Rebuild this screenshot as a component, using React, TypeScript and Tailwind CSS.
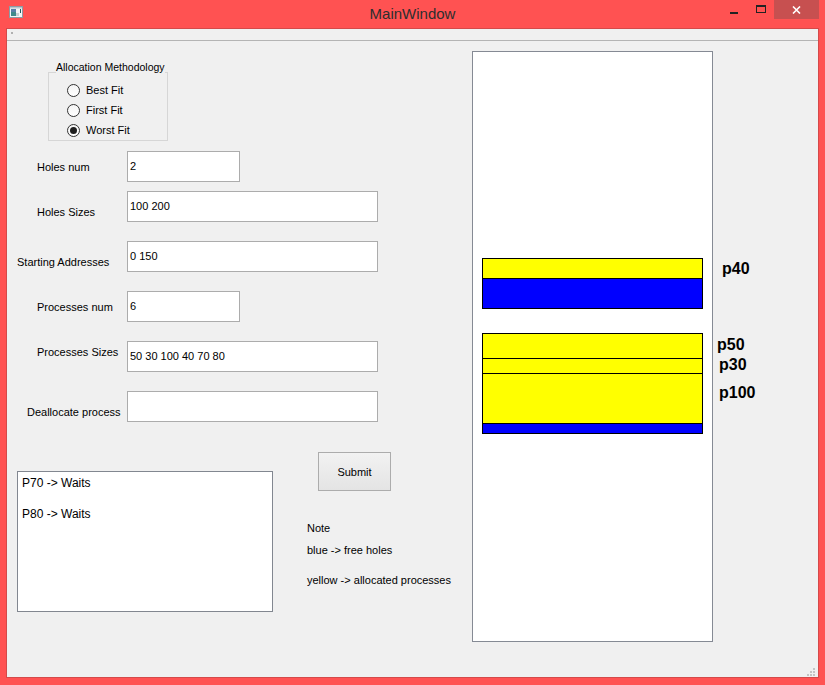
import { useState } from 'react'

type Segment = { name: string; size: number; free?: boolean }
type Hole = { start: number; segments: Segment[] }

// memory map: 1 unit of address = 0.5px on the canvas
const SCALE = 0.5
const BASE_Y = 206

const holes: Hole[] = [
  { start: 0, segments: [{ name: 'p40', size: 40 }, { name: 'free', size: 60, free: true }] },
  {
    start: 150,
    segments: [
      { name: 'p50', size: 50 },
      { name: 'p30', size: 30 },
      { name: 'p100', size: 100 },
      { name: 'free', size: 20, free: true },
    ],
  },
]

// the QLabels beside the view were placed by hand
const tags = [
  { text: 'p40', left: 250, top: 209 },
  { text: 'p50', left: 245, top: 285 },
  { text: 'p30', left: 247, top: 305 },
  { text: 'p100', left: 247, top: 333 },
]

const fields = [
  { label: 'Holes num', value: '2', wide: false, pl: 'pl-[30px]', pt: 'pt-[10px]', mt: 'mt-[10px]' },
  { label: 'Holes Sizes', value: '100 200', wide: true, pl: 'pl-[30px]', pt: 'pt-[15px]', mt: 'mt-[9px]' },
  { label: 'Starting Addresses', value: '0 150', wide: true, pl: 'pl-[10px]', pt: 'pt-[15px]', mt: 'mt-[19px]' },
  { label: 'Processes num', value: '6', wide: false, pl: 'pl-[30px]', pt: 'pt-[10px]', mt: 'mt-[19px]' },
  { label: 'Processes Sizes', value: '50 30 100 40 70 80', wide: true, pl: 'pl-[30px]', pt: 'pt-[5px]', mt: 'mt-[19px]' },
  { label: 'Deallocate process', value: '', wide: true, pl: 'pl-[20px]', pt: 'pt-[15px]', mt: 'mt-[19px]' },
]

function AppIcon() {
  return (
    <svg width="14" height="12" viewBox="0 0 14 12">
      <rect x="0.5" y="0.5" width="13" height="11" fill="#f4f6f7" stroke="#8d9ba4" />
      <rect x="1" y="1" width="12" height="1.5" fill="#b9c6cd" />
      <rect x="2" y="3" width="5" height="7" fill="#3f8a8a" />
      <rect x="2" y="3" width="5" height="3" fill="#5a7fa8" />
      <rect x="7" y="7" width="3" height="3" fill="#c9cfd3" />
      <rect x="11" y="3" width="1" height="4" fill="#1f5f5f" />
    </svg>
  )
}

function TitleBar() {
  return (
    <div className="grid h-[28px] grid-cols-[1fr_auto_1fr]">
      <div className="pl-[9px] pt-[6px]">
        <AppIcon />
      </div>
      <div className="text-[15px] leading-[27px] text-[#2e2e2e]">MainWindow</div>
      <div className="flex items-start justify-end pr-[6px]">
        <div className="mt-[12px] h-[2px] w-[8px] bg-[#222]" />
        <div className="ml-[18px] mt-[5px] h-[8px] w-[10px] border border-t-2 border-[#222]" />
        <div className="ml-[8px] flex h-[19px] w-[45px] items-center justify-center bg-[#c75050]">
          <svg width="9" height="8" viewBox="0 0 9 8">
            <path d="M1 0.5 L8 7.5 M8 0.5 L1 7.5" stroke="#fff" strokeWidth="1.6" />
          </svg>
        </div>
      </div>
    </div>
  )
}

function Radio({ label, checked, onPick }: { label: string; checked: boolean; onPick: () => void }) {
  return (
    <div className="flex h-[20px] items-center pl-[11px]" onClick={onPick}>
      <div className="flex h-[13px] w-[13px] items-center justify-center rounded-full border border-[#333] bg-gradient-to-b from-[#f4f4f4] to-white">
        {checked && <div className="h-[7px] w-[7px] rounded-full bg-[#1e1e1e]" />}
      </div>
      <span className="ml-[6px] text-[11px] leading-[13px]">{label}</span>
    </div>
  )
}

function MemoryView() {
  return (
    <div className="relative mt-[10px] h-[591px] w-[241px]">
      <div className="relative h-full w-full border border-[#858a94] bg-white">
        {holes.map((hole) => {
          let offset = hole.start
          return hole.segments.map((seg, i) => {
            const top = BASE_Y + offset * SCALE
            offset += seg.size
            return (
              <div
                key={hole.start + '-' + i}
                className={`absolute left-[9px] w-[221px] border border-black ${seg.free ? 'bg-[#0000ff]' : 'bg-[#ffff00]'}`}
                style={{ top, height: seg.size * SCALE + 1 }}
              />
            )
          })
        })}
      </div>
      {tags.map((t) => (
        <div
          key={t.text}
          className="absolute text-[16px] font-bold leading-[18px] text-black"
          style={{ left: t.left, top: t.top }}
        >
          {t.text}
        </div>
      ))}
    </div>
  )
}

export default function App() {
  const [method, setMethod] = useState('Worst Fit')

  return (
    <div className="flex h-[685px] w-[825px] flex-col overflow-hidden bg-[#ff5252] font-['Liberation_Sans',Arial,sans-serif] text-black">
      <TitleBar />

      <div className="relative ml-[6px] flex h-[650px] w-[813px] flex-col border border-[#d44a4a] bg-[#f0f0f0]">
        {/* menu bar */}
        <div className="h-[12px] border-b border-[#b4b4b4]">
          <div className="ml-[4px] mt-[3px] h-[2px] w-[2px] bg-[#b0b0b0]" />
        </div>

        <div className="flex flex-1">
          {/* left side */}
          <div className="flex w-[465px] flex-col">
            <fieldset className="ml-[41px] mt-[20px] w-[120px] border border-[#d6d6d6] pl-[7px]">
              <legend className="whitespace-nowrap pb-[9px] text-[10.5px] leading-[13px]">Allocation Methodology</legend>
              <div className="-mt-[3px]">
                {['Best Fit', 'First Fit', 'Worst Fit'].map((m) => (
                  <Radio key={m} label={m} checked={method === m} onPick={() => setMethod(m)} />
                ))}
              </div>
            </fieldset>

            {fields.map((f) => (
              <div key={f.label} className={`flex items-start ${f.mt}`}>
                <div className={`w-[120px] shrink-0 text-[11px] leading-[13px] ${f.pl} ${f.pt}`}>{f.label}</div>
                <div
                  className={`flex h-[31px] shrink-0 items-center border border-[#acacac] bg-white pl-[2px] text-[11px] ${f.wide ? 'w-[251px]' : 'w-[113px]'}`}
                >
                  {f.value}
                </div>
              </div>
            ))}

            <div className="mt-[30px] flex items-start">
              <div className="ml-[10px] mt-[19px] h-[141px] w-[256px] border border-[#828790] bg-white pl-[4px] pt-[4px] text-[12px] leading-[15px]">
                <div>P70 -&gt; Waits</div>
                <div className="mt-[16px]">P80 -&gt; Waits</div>
              </div>
              <div className="ml-[34px] flex flex-col text-[11px] leading-[13px]">
                <button className="ml-[11px] h-[39px] w-[73px] border border-[#acacac] bg-gradient-to-b from-[#f2f2f2] to-[#e4e4e4] pt-[1px] text-[11px]">
                  Submit
                </button>
                <div className="mt-[31px]">Note</div>
                <div className="mt-[9px]">blue -&gt; free holes</div>
                <div className="mt-[17px]">yellow -&gt; allocated processes</div>
              </div>
            </div>
          </div>

          {/* memory view */}
          <MemoryView />
        </div>

        {/* size grip */}
        <svg className="absolute bottom-0 right-[2px]" width="9" height="9" viewBox="0 0 9 9">
          <rect x="6" y="0" width="2" height="2" fill="#c4c4c4" />
          <rect x="3" y="3" width="2" height="2" fill="#c4c4c4" />
          <rect x="6" y="3" width="2" height="2" fill="#c4c4c4" />
          <rect x="0" y="6" width="2" height="2" fill="#c4c4c4" />
          <rect x="3" y="6" width="2" height="2" fill="#c4c4c4" />
          <rect x="6" y="6" width="2" height="2" fill="#c4c4c4" />
        </svg>
      </div>
    </div>
  )
}
